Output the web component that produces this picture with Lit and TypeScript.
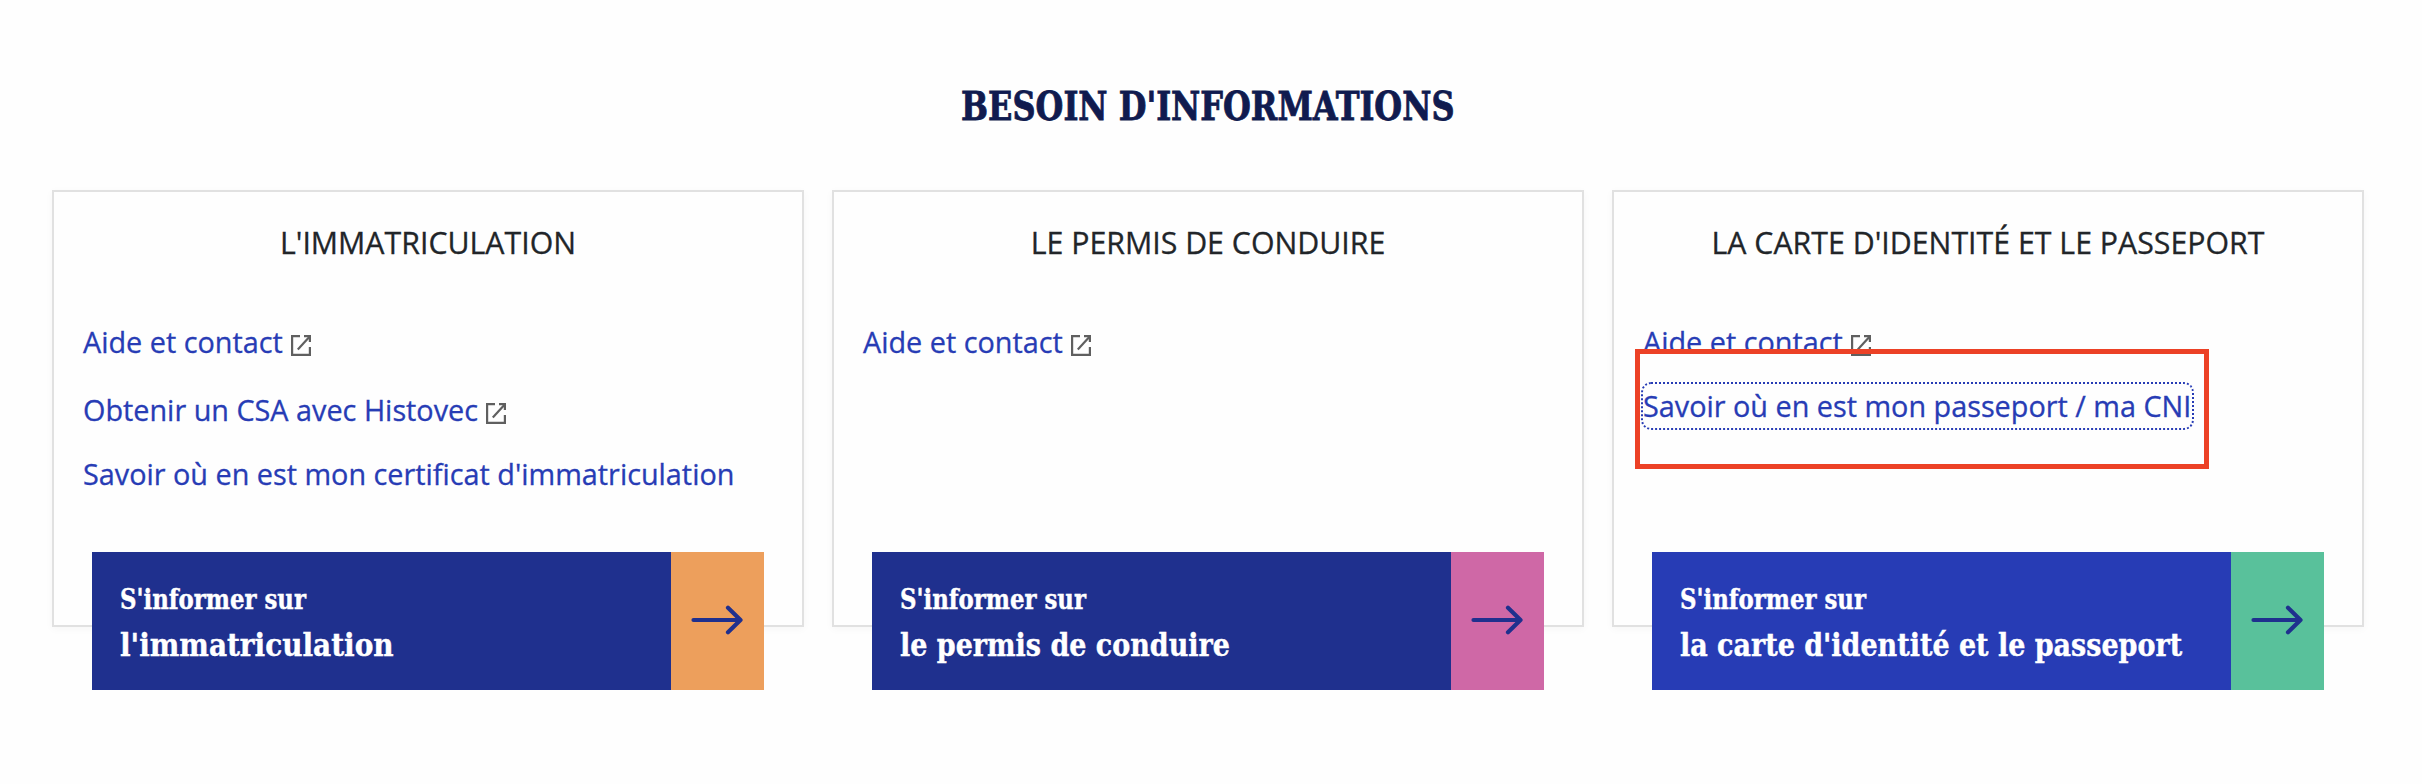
import { LitElement, html, css, nothing } from "lit";
import { customElement, property } from "lit/decorators.js";
import { classMap } from "lit/directives/class-map.js";

interface InfoLink {
  label: string;
  external?: boolean;
  focused?: boolean;
}

interface InfoCard {
  title: string;
  links: InfoLink[];
  topic: string;
  tone: "orange" | "pink" | "green";
  active?: boolean;
}

const CARDS: InfoCard[] = [
  {
    title: "L'IMMATRICULATION",
    links: [
      { label: "Aide et contact", external: true },
      { label: "Obtenir un CSA avec Histovec", external: true },
      { label: "Savoir où en est mon certificat d'immatriculation" },
    ],
    topic: "l'immatriculation",
    tone: "orange",
  },
  {
    title: "LE PERMIS DE CONDUIRE",
    links: [{ label: "Aide et contact", external: true }],
    topic: "le permis de conduire",
    tone: "pink",
  },
  {
    title: "LA CARTE D'IDENTITÉ ET LE PASSEPORT",
    links: [
      { label: "Aide et contact", external: true },
      { label: "Savoir où en est mon passeport / ma CNI", focused: true },
    ],
    topic: "la carte d'identité et le passeport",
    tone: "green",
    active: true,
  },
];

@customElement("info-card")
export class InfoCardElement extends LitElement {
  @property({ attribute: false }) card!: InfoCard;

  static styles = css`
    :host {
      box-sizing: border-box;
      position: relative;
      display: flex;
      flex-direction: column;
      height: 437px;
      padding-top: 31px;
      border: 2px solid #e1e1e1;
      background: #fefefe;
      box-shadow: 0 2px 8px rgba(0, 0, 0, 0.035);
    }
    .title {
      margin: 0 0 55px;
      color: #212529;
      font-size: 30.3px;
      font-weight: 400;
      line-height: 40px;
      text-align: center;
      white-space: nowrap;
      -webkit-text-stroke: 0.3px #212529;
    }
    .links {
      display: flex;
      flex-direction: column;
      align-items: flex-start;
      gap: 24px;
      margin: 0;
      padding: 0 0 0 29px;
      list-style: none;
    }
    .item {
      display: flex;
      gap: 8px;
    }
    .item.external {
      padding-top: 4px;
    }
    .link {
      color: #273cb5;
      font-size: 28.8px;
      line-height: 40px;
      white-space: nowrap;
      text-decoration: none;
      -webkit-text-stroke: 0.3px #273cb5;
    }
    .link.focused {
      margin: -2px 0;
      padding: 2px 1px 2px 0;
      border-radius: 8px;
      outline: 2px dotted #273cb5;
    }
    .external-icon {
      display: block;
      width: 20px;
      height: 21px;
      margin-top: 13px;
    }
    .cta {
      display: flex;
      height: 138px;
      margin: auto 38px -65px;
      color: #fff;
      font-family: "DejaVu Serif Condensed", "DejaVu Serif", serif;
      font-stretch: condensed;
      font-weight: 700;
      text-decoration: none;
      white-space: nowrap;
    }
    .cta-text {
      box-sizing: border-box;
      flex: 1;
      padding: 28px 0 0 28px;
      background: #1f308e;
      -webkit-text-stroke: 0.4px #fff;
    }
    .cta.active .cta-text {
      background: #273cb5;
    }
    .lead,
    .topic {
      display: block;
      width: max-content;
      transform-origin: 0 50%;
    }
    .lead {
      margin-bottom: 1px;
      font-size: 27px;
      line-height: 40px;
      transform: scaleX(0.94);
    }
    .topic {
      font-size: 32px;
      line-height: 48px;
      transform: scaleX(0.937);
    }
    .orange .topic {
      transform: scaleX(0.97);
    }
    .cta-arrow {
      display: flex;
      align-items: center;
      justify-content: center;
      box-sizing: border-box;
      width: 93px;
      padding: 0 1.5px 2px 0;
    }
    .orange .cta-arrow {
      background: #ed9f5c;
    }
    .pink .cta-arrow {
      background: #cf68a6;
    }
    .green .cta-arrow {
      background: #59c19b;
    }
    .marker {
      position: absolute;
      left: 21px;
      top: 157px;
      box-sizing: border-box;
      width: 574px;
      height: 120px;
      border: 5px solid #ec4126;
    }
  `;

  private renderLink(link: InfoLink) {
    return html`<li class=${classMap({ item: true, external: !!link.external })}>
      <a class=${classMap({ link: true, focused: !!link.focused })}>${link.label}</a>
      ${link.external
        ? html`<svg class="external-icon" viewBox="0 0 20 21" fill="none" stroke="#5f5f5f">
            <path d="M9 1.1H1.1V19.8H18.9V12" stroke-width="2.2" />
            <path d="M13 1.1H18.9V7" stroke-width="2.2" />
            <path d="M6.8 14.4L18.5 1.8" stroke-width="2.2" />
          </svg>`
        : nothing}
    </li>`;
  }

  render() {
    const { title, links, topic, tone, active } = this.card;
    return html`
      <h3 class="title">${title}</h3>
      <ul class="links">${links.map((l) => this.renderLink(l))}</ul>
      <a class=${classMap({ cta: true, [tone]: true, active: !!active })}>
        <span class="cta-text">
          <span class="lead">S'informer sur</span>
          <span class="topic">${topic}</span>
        </span>
        <span class="cta-arrow">
          <svg width="52" height="30" viewBox="0 0 52 30" fill="none" stroke="#1f308e"
            stroke-width="4.2" stroke-linecap="round" stroke-linejoin="round">
            <path d="M2.5 15H49M37 2.8L49.5 15L37 27.2" />
          </svg>
        </span>
      </a>
      ${links.some((l) => l.focused) ? html`<div class="marker"></div>` : nothing}
    `;
  }
}

@customElement("app-root")
export class AppRoot extends LitElement {
  static styles = css`
    :host {
      display: block;
      box-sizing: border-box;
      min-height: 784px;
      padding: 76px 58px 0 52px;
      background: #fefefe;
      font-family: "Open Sans", sans-serif;
    }
    .heading {
      display: flex;
      justify-content: center;
      margin: 0 0 54px;
      color: #101b4f;
      font-family: "DejaVu Serif Condensed", "DejaVu Serif", serif;
      font-stretch: condensed;
      font-size: 40px;
      font-weight: 700;
      line-height: 60px;
      white-space: nowrap;
      -webkit-text-stroke: 0.8px #101b4f;
    }
    .heading-text {
      transform: scaleX(0.888);
    }
    .cards {
      display: grid;
      grid-template-columns: repeat(3, 1fr);
      gap: 28px;
    }
  `;

  render() {
    return html`
      <h2 class="heading"><span class="heading-text">BESOIN D'INFORMATIONS</span></h2>
      <div class="cards">
        ${CARDS.map((c) => html`<info-card .card=${c}></info-card>`)}
      </div>
    `;
  }
}
